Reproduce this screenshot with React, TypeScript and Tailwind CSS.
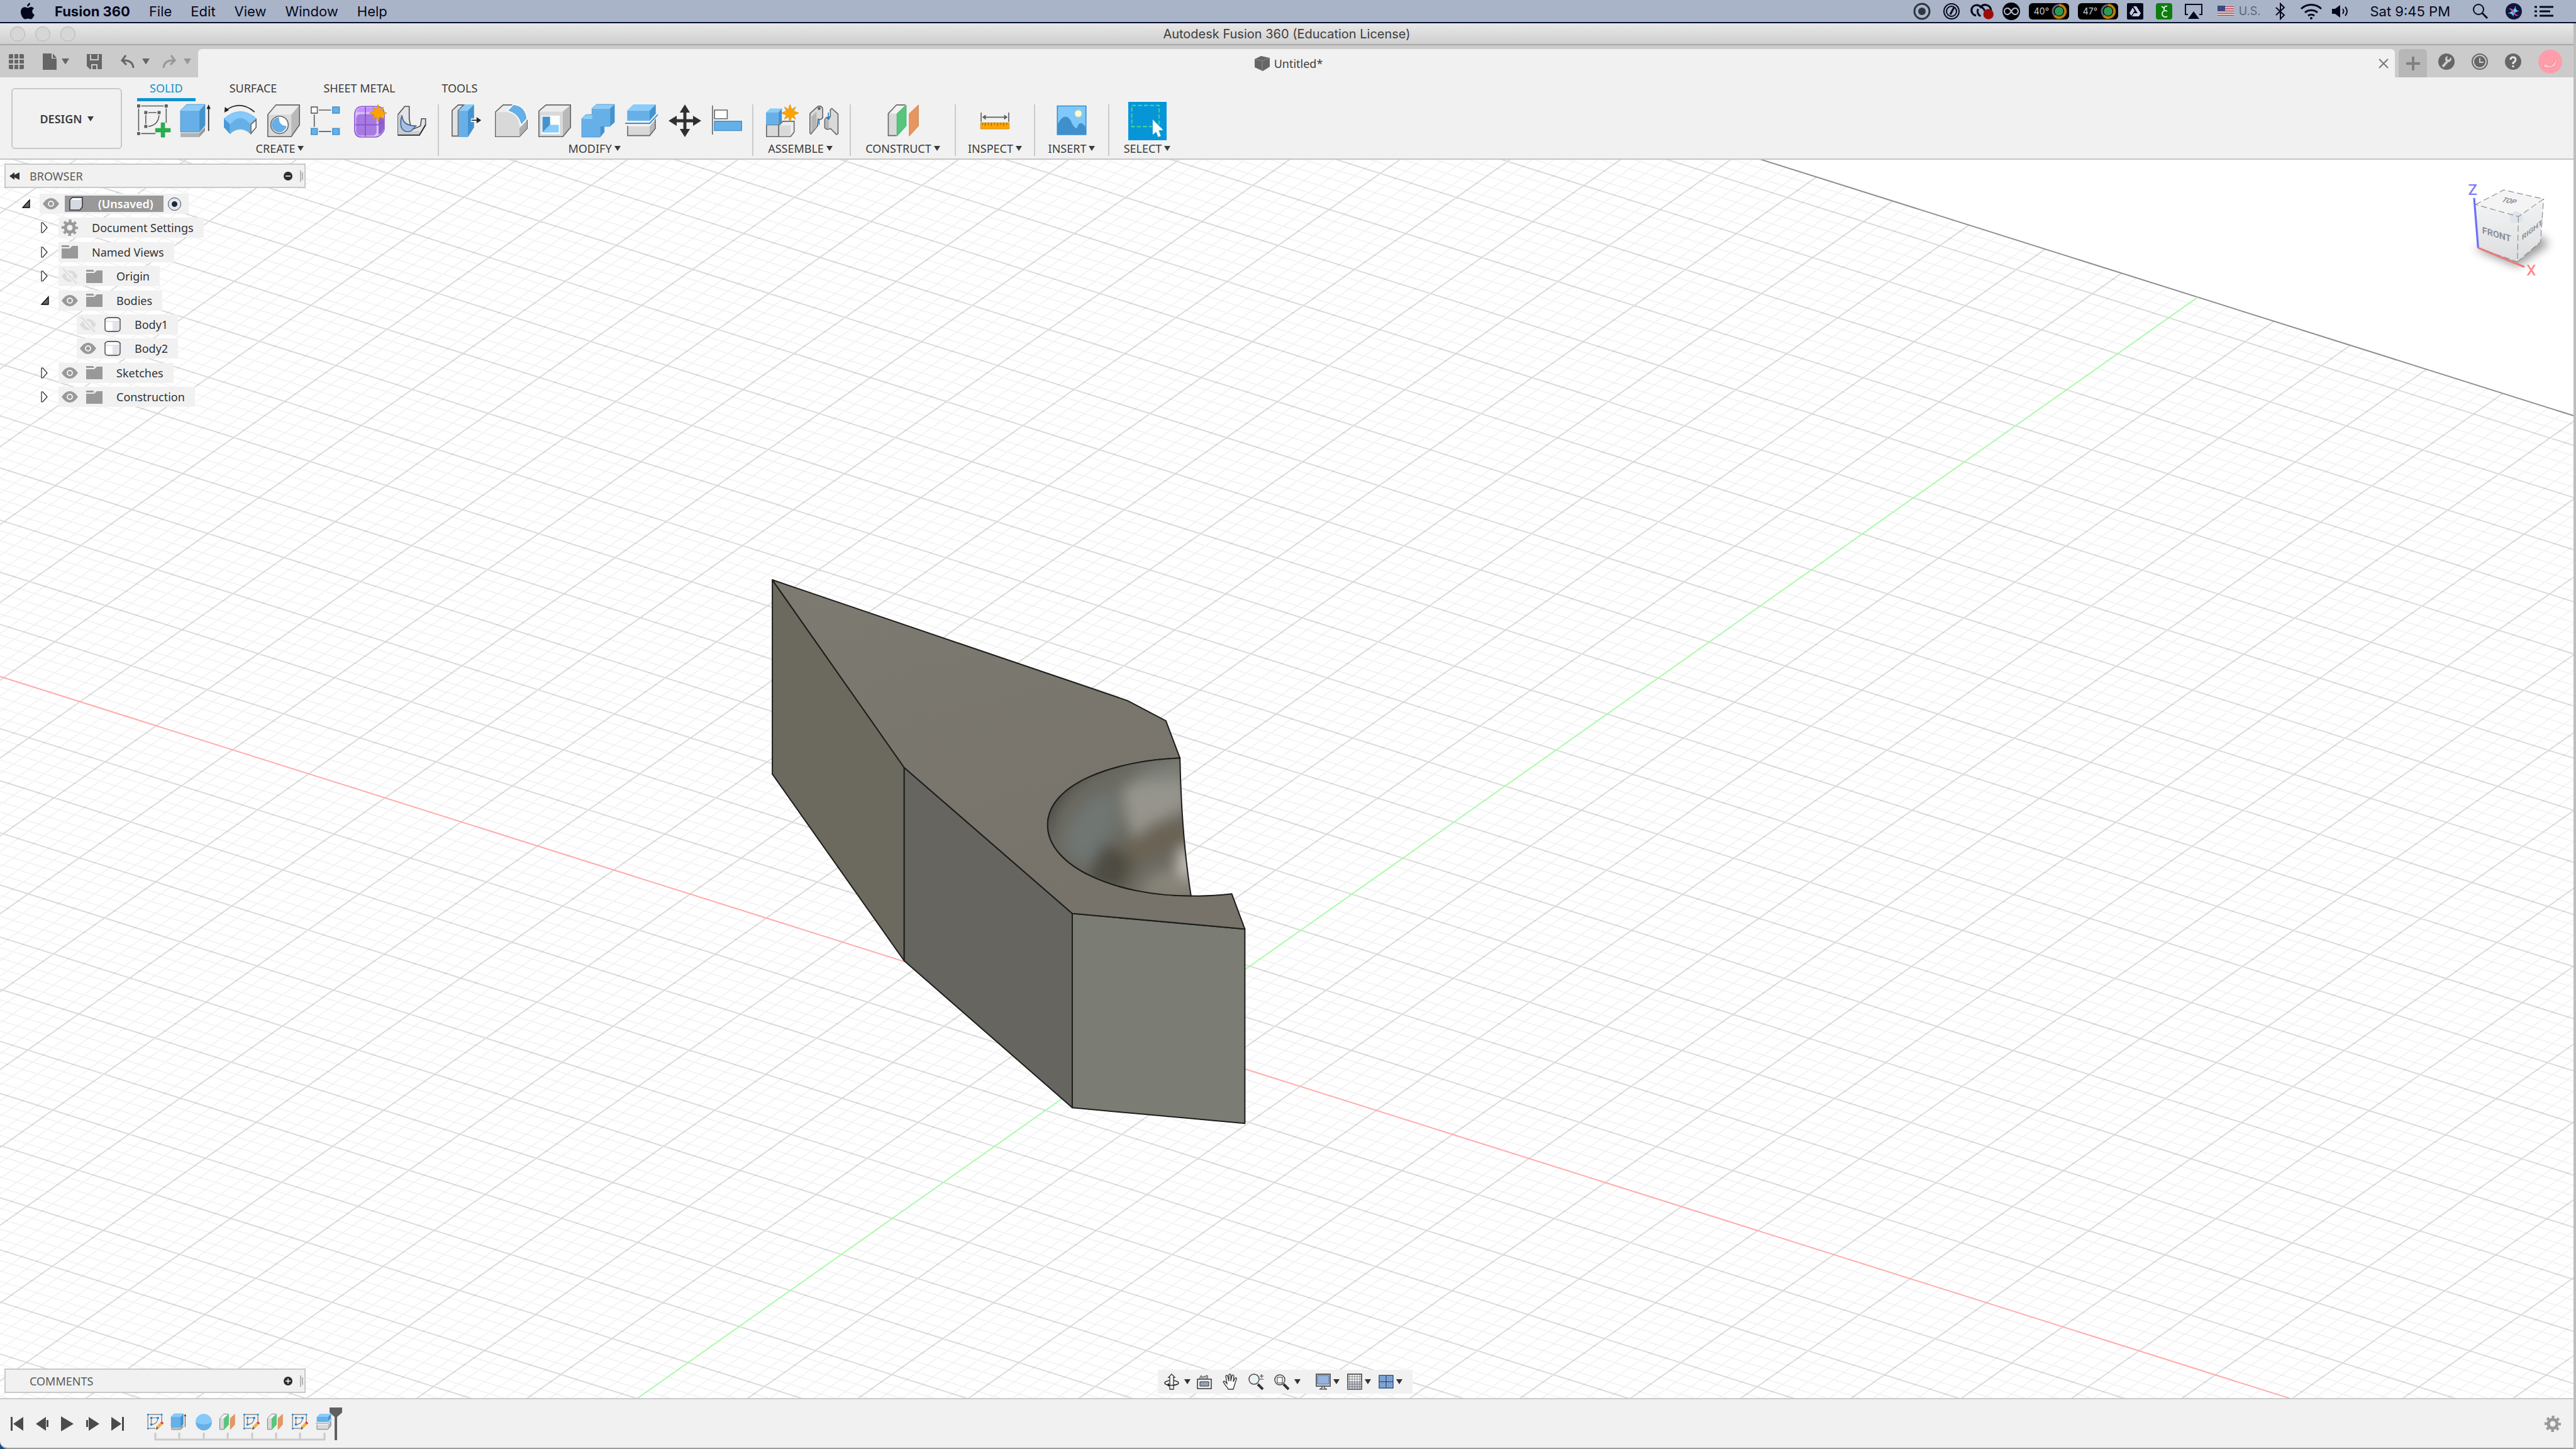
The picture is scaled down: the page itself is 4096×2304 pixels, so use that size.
import type { ReactNode } from "react"
import clsx from "clsx"

/* ---------- shared bits ---------- */

interface IconProps {
  children: ReactNode
  box?: string
  className?: string
}

const Icon: React.FC<IconProps> = ({
  children,
  box = "0 0 64 64",
  className = "size-[52px]",
}) => (
  <svg viewBox={box} className={clsx("shrink-0 overflow-visible", className)} aria-hidden="true">
    {children}
  </svg>
)

const Caret = ({ className = "w-2.5" }: { className?: string }) => (
  <svg viewBox="0 0 10 8" className={clsx("shrink-0", className)} aria-hidden="true">
    <path d="M0 0h10L5 8z" fill="currentColor" />
  </svg>
)

const Star = ({ x, y }: { x: number; y: number }) => (
  <path
    transform={`translate(${x} ${y})`}
    d="M0-17 3-7 11-12 7-4 17 0 7 4 11 12 3 7 0 17-3 7-11 12-7 4-17 0-7-4-11-12-3-7z"
    fill="#ffa300"
    stroke="#d98c00"
    strokeWidth="1"
  />
)

/* ---------- ribbon icons ---------- */

const SketchIcon = () => (
  <Icon>
    <g fill="#5f5f5f">
      <path d="M0 0h6v6H0zM54 0h6v6h-6zM0 54h6v6H0zM14 13h6v6h-6zM40 13h6v6h-6zM14 40h6v6h-6z" />
    </g>
    <path d="M8 3h44M3 8v44M57 8v28M8 57h28M22 16h16M17 21v17M43 21q-2 20-21 22" fill="none" stroke="#5f5f5f" strokeWidth="2" />
    <path d="M47 36h7v11h11v7H54v10h-7V54H36v-7h11z" fill="#26b04c" stroke="#149a3a" />
  </Icon>
)

const ExtrudeShape = () => (
  <>
    <path d="M0 56h37v8H0z" fill="#b3b3b3" />
    <path d="M37 56 48 44v8L37 64z" fill="#9a9a9a" />
    <path d="M0 12h37v42H0z" fill="#67b0e7" />
    <path d="M0 12 12 0h36L37 12z" fill="#8accfb" />
    <path d="M37 12 48 0v41L37 54z" fill="#4493cf" />
    <path d="M0 12v42h37l11-13V0H12z" fill="none" stroke="#3f90cd" strokeWidth="1" />
    <path d="M55 52V6" stroke="#222" strokeWidth="2" />
    <path d="m55 0 4 9h-8z" fill="#222" />
  </>
)

const RevolveIcon = () => (
  <Icon>
    <path d="M0 28Q32 0 64 28L52 39Q32 15 12 39z" fill="#86c9fb" stroke="#69b3e8" />
    <path d="M12 39Q32 15 52 39v19Q32 40 12 58z" fill="#67b0e7" />
    <path d="M0 28 12 39v19L0 45z" fill="#4a99d4" />
    <path d="m53 39 10-9v15L53 57z" fill="#fff" stroke="#5f5f5f" strokeWidth="2" />
    <path d="M60 15Q34-8 6 10" fill="none" stroke="#222" strokeWidth="2" />
    <path d="m1 16 1-11 8 6z" fill="#222" />
  </Icon>
)

const HoleIcon = () => (
  <Icon>
    <path d="M0 20 17 0h47v40L47 64H0z" fill="#ededed" />
    <path d="M0 20h47v44H0z" fill="#d9d9d9" />
    <path d="M47 20 64 0v40L47 64z" fill="#b9b9b9" />
    <path d="M1 20 17 1h46v39L47 63H1z" fill="none" stroke="#666" strokeWidth="2" />
    <circle cx="24" cy="40" r="17" fill="#fff" stroke="#666" strokeWidth="2" />
    <path d="M22 26q0 16 15 17a14 14 0 1 1-15-17z" fill="#67b0e7" stroke="#4493cf" />
  </Icon>
)

const PatternIcon = () => (
  <Icon>
    <path d="M1 5h12v12H1z" fill="#fff" stroke="#5f5f5f" strokeWidth="2" />
    <path d="M43 5h13v12H43zM1 47h12v12H1zM43 47h13v12H43z" fill="#67b0e7" stroke="#4493cf" strokeWidth="2" />
    <path d="M16 11h24M16 53h24M7 20v24" stroke="#5f5f5f" strokeWidth="2" />
  </Icon>
)

const FormIcon = () => (
  <Icon>
    <path d="M1 20Q2 4 16 4h28q14 0 15 14v28q0 6-4 10-6 8-14 8H14Q2 64 1 50z" fill="#d8c1f7" stroke="#8e5ad0" strokeWidth="2" />
    <path d="M14 6h28q6 0 4 9H5q3-9 9-9z" fill="#c391ff" />
    <rect x="4" y="19" width="40" height="42" rx="8" fill="#a779e2" />
    <path d="M48 26q10-4 10 4v16q-2 10-10 13z" fill="#8f5fd1" />
    <path d="M2 40h44l12-6M22 5v58" fill="none" stroke="#8552c6" strokeWidth="2" />
    <Star x={47} y={17} />
  </Icon>
)

const RibIcon = () => (
  <Icon>
    <path d="M1 20 14 4h9v24l4 22 18-8 2-14h8v12L43 60H1z" fill="#e2e4e8" stroke="#4f4f55" strokeWidth="2" />
    <path d="M1 20h8v28l8 8 26-5v9H1z" fill="#c8ccd3" />
    <path d="M9 22q1 20 27 20l-9 10q-12 5-19-6-4-10 1-24z" fill="#a4c0e4" stroke="#4a6390" strokeWidth="2" />
    <path d="M1 60h42l12-20" fill="none" stroke="#222" strokeWidth="2" />
  </Icon>
)

const PressPullIcon = () => (
  <Icon>
    <path d="M1 12 13 1h11L13 12v50H1z" fill="#e2e2e2" stroke="#5f5f5f" strokeWidth="2" />
    <path d="M14 12h18v52H14z" fill="#67b0e7" />
    <path d="M14 12 26 0h18L32 12z" fill="#8accfb" />
    <path d="M32 12 44 0v45L32 64z" fill="#4493cf" />
    <path d="M38 31h13" stroke="#fff" strokeWidth="7" />
    <path d="M39 31h13" stroke="#222" strokeWidth="2" />
    <path d="m49 25 9 6-9 6z" fill="#222" />
  </Icon>
)

const FilletIcon = () => (
  <Icon>
    <path d="M1 15 16 1h20l27 30v16L48 63H1z" fill="#ededed" stroke="#666" strokeWidth="2" />
    <path d="M48 46 62 32v15L48 62z" fill="#b0b0b0" />
    <path d="M2 15h22q24 3 24 32v15H2z" fill="#d9d9d9" />
    <path d="M24 13 36 0q24 2 27 28L51 41Q46 18 24 13z" fill="#67b0e7" stroke="#fff" strokeWidth="2" />
  </Icon>
)

const ShellIcon = () => (
  <Icon>
    <path d="M0 12 15 0h49v45L48 64H0z" fill="#ededed" />
    <path d="M0 14h48v50H0z" fill="#d9d9d9" />
    <path d="M48 14 64 0v45L48 64z" fill="#b9b9b9" />
    <path d="M1 13 15 1h48v44L48 63H1z" fill="none" stroke="#666" strokeWidth="2" />
    <path d="M6 22h36v36H6z" fill="#fff" />
    <path d="M8 24h15v16L8 55z" fill="#4493cf" />
    <path d="m8 55 15-15h17v15z" fill="#8accfb" />
  </Icon>
)

const CombineIcon = () => (
  <Icon>
    <path d="M0 28h20V8h35v35H36v21H0z" fill="#67b0e7" />
    <path d="M0 28 8 20h12v8zM20 8l9-8h35l-9 8z" fill="#8accfb" />
    <path d="m55 8 9-8v35l-9 8H44v11l-8 10V43h19z" fill="#4493cf" />
    <path d="M0 28 8 20h12V8l9-8h35v35l-9 8H44v11l-8 10H0z" fill="none" stroke="#4493cf" />
  </Icon>
)

const SplitShape = () => (
  <>
    <path d="M4 12h44v20H4z" fill="#67b0e7" />
    <path d="M4 12 16 0h44L48 12z" fill="#8accfb" />
    <path d="M48 12 60 0v18L48 32z" fill="#4493cf" />
    <path d="M0 37h48l16-17" fill="none" stroke="#1088d0" strokeWidth="2" />
    <path d="M5 43h43v18H5z" fill="#d9d9d9" />
    <path d="m48 43 11-13v16L48 61z" fill="#b9b9b9" />
    <path d="M5 42v19h43l11-14V29" fill="none" stroke="#666" strokeWidth="2" />
  </>
)

const MoveIcon = () => (
  <Icon>
    <path
      d="m32 0 10 16h-7v13h13v-7l16 10-16 10v-7H35v13h7L32 64 22 48h7V35H16v7L0 32l16-10v7h13V16h-7z"
      fill="#303030"
    />
  </Icon>
)

const AlignIcon = () => (
  <Icon>
    <path d="M1 2v57" stroke="#666" strokeWidth="2" />
    <path d="M5 11h25v17H5z" fill="#fff" stroke="#666" strokeWidth="2" />
    <path d="M5 33h53v18H5z" fill="#67b0e7" stroke="#4493cf" strokeWidth="2" />
  </Icon>
)

const NewComponentIcon = () => (
  <Icon>
    <path d="M1 40h24v23H1z" fill="#d9d9d9" stroke="#666" strokeWidth="2" />
    <path d="m25 41 8-8h22v21l-7 9H25z" fill="#ededed" stroke="#666" strokeWidth="2" />
    <path d="M26 41h22v21H26z" fill="#d9d9d9" />
    <path d="M0 16h24v24H0z" fill="#67b0e7" />
    <path d="m0 16 8-8h23l-7 8z" fill="#8accfb" />
    <path d="m24 16 7-8v26l-7 6z" fill="#4493cf" />
    <Star x={47} y={17} />
  </Icon>
)

const JointIcon = () => (
  <Icon>
    <path d="m1 18 14-13q4-3 8-1 3 2 3 6v16q-3 5-9 3l-1 13L3 58l-2-2z" fill="#d9d9d9" stroke="#666" strokeWidth="2" />
    <path d="m4 24 10-10v30L4 55z" fill="#b5b5b5" />
    <circle cx="19" cy="8" r="3" fill="#666" />
    <path d="M19 29v11" stroke="#1088d0" strokeWidth="2" />
    <path d="M56 19 44 8l-3 2v14l-8 2q-3 2-3 6v14q5 5 11 1l12 12 3-2z" fill="#d9d9d9" stroke="#666" strokeWidth="2" />
    <path d="M31 30h7v17h-7z" fill="#b5b5b5" />
    <path d="M37 16v11" stroke="#1088d0" strokeWidth="2" />
    <circle cx="37" cy="27" r="3" fill="#1088d0" />
  </Icon>
)

const ConstructShape = () => (
  <>
    <path d="M0 18 17 1h17L18 18z" fill="#f2f2f2" />
    <path d="M1 18h17v43H1z" fill="#d9d9d9" />
    <path d="M34 1H17L1 18v43h16" fill="none" stroke="#666" strokeWidth="2" />
    <path d="M18 18 36 1v41L18 62z" fill="#57c57c" stroke="#2faa5a" />
    <path d="M42 18 60 1v41L42 62z" fill="#e69660" stroke="#cf7a42" />
  </>
)

const MeasureIcon = () => (
  <Icon box="-4 0 64 64">
    <path d="M1 16v18M55 16v18M6 25h44" stroke="#5f5f5f" strokeWidth="2" />
    <path d="m3 25 7-5v10zM53 25l-7-5v10z" fill="#5f5f5f" />
    <path d="M0 36h56v12H0z" fill="#ffa300" stroke="#c98a12" />
    <path d="M4 36v4M9 36v6M15 36v4M21 36v6M27 36v4M33 36v6M39 36v4M45 36v6M51 36v4" stroke="#6b4a00" />
  </Icon>
)

const InsertIcon = () => (
  <Icon box="-3 0 64 64">
    <path d="M1 3h56v56H1z" fill="#80c8fb" stroke="#3b8ecb" strokeWidth="2" />
    <circle cx="42" cy="18" r="7" fill="#fdfbd0" stroke="#b8cfa4" />
    <path d="M1 40q8-16 16-16t13 14q5 8 9 9 4-12 9-10 5 1 9 9v13H1z" fill="#3d90cc" />
  </Icon>
)

const SelectIcon = () => (
  <Icon box="0 0 76 76" className="-my-1 size-[61px] bg-[#0696d7]">
    <path d="M7 7h54v42H7z" fill="none" stroke="#53e08a" strokeWidth="2" strokeDasharray="8 4" />
    <path d="M48 34v32l7-6 4 10 6-2-4-11 9-1z" fill="#fff" stroke="#0696d7" />
  </Icon>
)

/* ---------- ribbon ---------- */

interface RibbonGroup {
  label: string
  width?: string
  tools: { name: string; icon: ReactNode }[]
}

const groups: RibbonGroup[] = [
  {
    label: "CREATE",
    tools: [
      { name: "Create Sketch", icon: <SketchIcon /> },
      { name: "Extrude", icon: <Icon><ExtrudeShape /></Icon> },
      { name: "Revolve", icon: <RevolveIcon /> },
      { name: "Hole", icon: <HoleIcon /> },
      { name: "Rectangular Pattern", icon: <PatternIcon /> },
      { name: "Create Form", icon: <FormIcon /> },
      { name: "Rib", icon: <RibIcon /> },
    ],
  },
  {
    label: "MODIFY",
    tools: [
      { name: "Press Pull", icon: <PressPullIcon /> },
      { name: "Fillet", icon: <FilletIcon /> },
      { name: "Shell", icon: <ShellIcon /> },
      { name: "Combine", icon: <CombineIcon /> },
      { name: "Split Body", icon: <Icon><SplitShape /></Icon> },
      { name: "Move", icon: <MoveIcon /> },
      { name: "Align", icon: <AlignIcon /> },
    ],
  },
  {
    label: "ASSEMBLE",
    tools: [
      { name: "New Component", icon: <NewComponentIcon /> },
      { name: "Joint", icon: <JointIcon /> },
    ],
  },
  {
    label: "CONSTRUCT",
    width: "w-[167px]",
    tools: [{ name: "Offset Plane", icon: <Icon box="-2 0 64 64"><ConstructShape /></Icon> }],
  },
  { label: "INSPECT", width: "w-[126px]", tools: [{ name: "Measure", icon: <MeasureIcon /> }] },
  { label: "INSERT", width: "w-[118px]", tools: [{ name: "Insert Image", icon: <InsertIcon /> }] },
  { label: "SELECT", width: "w-[120px]", tools: [{ name: "Select", icon: <SelectIcon /> }] },
]

const tabs = ["SOLID", "SURFACE", "SHEET METAL", "TOOLS"]

const Ribbon = () => (
  <div className="flex h-[131px] shrink-0 border-b-2 border-[#c6c6c6] bg-[#f1f1f1] pl-[18px] text-[18px] leading-6 text-[#3c3c3c]">
    <button className="mt-[17px] flex h-[97px] w-[176px] items-center justify-center gap-2 rounded-md border-2 border-[#c9c9c9] font-semibold">
      DESIGN
      <Caret />
    </button>
    <div className="ml-1 flex flex-col">
      <nav className="flex h-[38px] gap-[34px] pl-5">
        {tabs.map((tab, i) => (
          <button
            key={tab}
            className={clsx(
              "border-b-5 px-5",
              i === 0 ? "border-[#0f93d2] text-[#0f93d2]" : "border-transparent",
            )}
          >
            {tab}
          </button>
        ))}
      </nav>
      <div className="mt-[5px] flex">
        {groups.map((group, i) => (
          <div
            key={group.label}
            className={clsx(
              "flex h-[82px] flex-col items-center justify-between",
              i < groups.length - 1 && "border-r-2 border-[#cbcbcb]",
              group.width ?? "pl-5 pr-3",
            )}
          >
            <div className="flex h-[52px] items-center gap-[17px]">
              {group.tools.map((tool) => (
                <button key={tool.name} aria-label={tool.name}>
                  {tool.icon}
                </button>
              ))}
            </div>
            <button className={clsx("flex items-center gap-1", !group.width && "pr-3")}>
              {group.label}
              <Caret />
            </button>
          </div>
        ))}
      </div>
    </div>
  </div>
)

/* ---------- system menu bar ---------- */

const SystemBar = () => (
  <header className="flex h-[37px] shrink-0 items-center border-b-2 border-[#03102e] bg-[#a9b4c9] pl-[33px] pr-9 font-[Inter,sans-serif] text-[22px] leading-8 text-[#05081c]">
    <Icon box="0 0 22 27" className="h-7 w-[22px]">
      <path
        d="M15 0q0 5-5 6 0-5 5-6zM11 8c2 0 3-1.500 5.500-1.500 2 0 3.500 1 4.500 2.500-4 2.500-3.500 8 .8 9.700C20.500 22.500 18 26 16 26c-1.700 0-2.500-1-4.500-1S8.500 26 7 26C4 26 0 20 0 14.500 0 9.500 3 6.700 6.300 6.700 8.500 6.700 10 8 11 8z"
        fill="currentColor"
      />
    </Icon>
    <nav className="ml-8 flex gap-[30px]">
      {["Fusion 360", "File", "Edit", "View", "Window", "Help"].map((item, i) => (
        <button key={item} className={clsx(i === 0 && "font-bold")}>
          {item}
        </button>
      ))}
    </nav>

    <div className="ml-auto flex items-center">
      <Icon box="0 0 28 28" className="size-7">
        <circle cx="14" cy="14" r="12" fill="none" stroke="#30363f" strokeWidth="3" />
        <circle cx="14" cy="14" r="6" fill="#30363f" />
      </Icon>
      <Icon box="0 0 26 26" className="ml-5 size-[26px]">
        <circle cx="13" cy="13" r="12" fill="none" stroke="currentColor" strokeWidth="2" />
        <circle cx="13" cy="13" r="8" fill="none" stroke="currentColor" strokeWidth="2" />
        <path d="m17 7-6 11" stroke="currentColor" strokeWidth="3" />
      </Icon>
      <Icon box="0 0 33 26" className="ml-5 w-[34px]">
        <path d="M6 20a8 8 0 1 1 7-13 9 9 0 0 1 16 5M13 21a8 8 0 0 1-4-11M13 7q5 1 6 6" fill="none" stroke="currentColor" strokeWidth="3" />
        <circle cx="25" cy="18" r="8" fill="#9b0b0b" />
      </Icon>
      <Icon box="0 0 28 28" className="ml-3.5 size-7">
        <circle cx="14" cy="14" r="14" fill="#04040a" />
        <path d="M14 14q-3-5-6-5a5 5 0 0 0 0 10q3 0 6-5 3-5 6-5a5 5 0 0 1 0 10q-3 0-6-5z" fill="none" stroke="#b9c4da" strokeWidth="2" />
      </Icon>
      {["40°", "47°"].map((temp) => (
        <span key={temp} className="ml-3.5 flex h-[26px] w-16 items-center justify-between rounded-md bg-black pl-2 pr-1 text-[14px] leading-6 text-[#c4cad6]">
          {temp}
          <Icon box="0 0 24 24" className="size-6">
            <circle cx="12" cy="12" r="10" fill="none" stroke="#5c6678" strokeWidth="3" />
            <path d="M12 2a10 10 0 1 1-7 17" fill="none" stroke="#bd7a0c" strokeWidth="4" />
            <circle cx="12" cy="12" r="7" fill="#2d9a52" />
          </Icon>
        </span>
      ))}
      <Icon box="0 0 26 26" className="ml-3.5 size-[26px]">
        <rect width="26" height="26" rx="2" fill="#05081c" />
        <path d="M10 5h5l7 11h-5zM9 7l3 5-5 8-3-4zM11 16h11l-3 5H8z" fill="#c5cde0" />
      </Icon>
      <Icon box="0 0 26 26" className="ml-5 size-[26px]">
        <rect width="26" height="26" rx="4" fill="#0d7d0d" />
        <path d="M18 13a5 5 0 1 0 0 8M13 11V8l-4-3M13 8q1-4 5-3" fill="none" stroke="#d9f3d9" strokeWidth="2" />
      </Icon>
      <Icon box="0 0 28 24" className="ml-5 w-7">
        <path d="M5 17H1V1h26v16h-4" fill="none" stroke="currentColor" strokeWidth="2" />
        <path d="m14 12 9 12H5z" fill="currentColor" />
      </Icon>
      <Icon box="0 0 26 17" className="ml-6 w-[26px]">
        <path d="M0 0h26v17H0z" fill="#e8dcdc" />
        <path d="M0 1.500h26M0 5h26M0 8.500h26M0 12h26M0 15.500h26" stroke="#a83a4a" strokeWidth="1.700" />
        <path d="M0 0h12v9H0z" fill="#3a4a82" />
      </Icon>
      <span className="ml-2 text-[18px] text-[#5c6374]">U.S.</span>
      <Icon box="0 0 16 26" className="ml-6 w-4">
        <path d="m1 7 13 12-6 6V1l6 6L1 19" fill="none" stroke="currentColor" strokeWidth="2" />
      </Icon>
      <Icon box="0 0 34 26" className="ml-6 w-[34px]">
        <path d="M1 9a23 23 0 0 1 32 0M7 15a15 15 0 0 1 20 0M12 20a8 8 0 0 1 10 0" fill="none" stroke="currentColor" strokeWidth="3" />
        <circle cx="17" cy="24" r="2" fill="currentColor" />
      </Icon>
      <Icon box="0 0 28 22" className="ml-4 w-7">
        <path d="M0 7h5l8-6v20l-8-6H0z" fill="currentColor" />
        <path d="M17 7q3 4 0 8M21 4q6 7 0 14" fill="none" stroke="currentColor" strokeWidth="2" />
      </Icon>
      <span className="ml-8">Sat 9:45 PM</span>
      <Icon box="0 0 24 24" className="ml-9 w-6">
        <circle cx="9" cy="9" r="8" fill="none" stroke="currentColor" strokeWidth="2" />
        <path d="m15 15 8 8" stroke="currentColor" strokeWidth="3" />
      </Icon>
      <Icon box="0 0 26 26" className="ml-7 size-[26px]">
        <circle cx="13" cy="13" r="13" fill="#12143a" />
        <path d="M3 16q10-2 13-12-1 8 6 9-9 0-10 9 0-6-9-6z" fill="#5ad2ee" />
        <path d="M5 8q7 0 9 6t8 5q-6 3-9-2T5 8z" fill="#d04fb0" />
      </Icon>
      <Icon box="0 0 30 18" className="ml-5 w-[30px]">
        <path d="M0 2h4M8 2h22M0 9h4M8 9h17M0 16h4M8 16h22" stroke="currentColor" strokeWidth="3" />
      </Icon>
    </div>
  </header>
)

/* ---------- document strip ---------- */

const DocumentStrip = () => (
  <div className="flex h-[51px] shrink-0 bg-[#cbcbcb] text-[#666]">
    <div className="flex w-[315px] items-center pl-3.5">
      <button aria-label="Data panel">
        <Icon box="0 0 24 24" className="size-6">
          <rect width="24" height="24" rx="2" fill="currentColor" />
          <path d="M8 0v24M16 0v24M0 8h24M0 16h24" stroke="#cbcbcb" strokeWidth="2" />
        </Icon>
      </button>
      <button className="ml-[30px] flex items-center gap-2" aria-label="File">
        <Icon box="0 0 22 26" className="w-[22px]">
          <path d="M0 0h14v8h8v18H0zM16 0l6 7h-6z" fill="currentColor" />
        </Icon>
        <Caret className="w-3" />
      </button>
      <button className="ml-7" aria-label="Save">
        <Icon box="0 0 24 24" className="size-6">
          <path d="M0 0h24v24H5l-5-5z" fill="currentColor" />
          <path d="M6 1v8h12V1M8 24v-7h8v7" fill="none" stroke="#cbcbcb" strokeWidth="2" />
        </Icon>
      </button>
      <button className="ml-[30px] flex items-center gap-3" aria-label="Undo">
        <Icon box="0 0 22 22" className="w-[22px]">
          <path d="M8 1 2 9l7 7M3 9q16-1 17 12" fill="none" stroke="currentColor" strokeWidth="3" />
        </Icon>
        <Caret className="w-3" />
      </button>
      <button className="ml-5 flex items-center gap-3 text-[#979797]" aria-label="Redo">
        <Icon box="0 0 22 22" className="w-[22px]">
          <path d="m14 1 6 8-7 7M19 9Q3 8 2 21" fill="none" stroke="currentColor" strokeWidth="3" />
        </Icon>
        <Caret className="w-3" />
      </button>
    </div>

    <div className="mt-1.5 flex flex-1 items-center rounded-t-md bg-[#f1f1f1] pr-2.5 text-[18px] leading-6 text-[#3c3c3c]">
      <div className="flex flex-1 items-center justify-center gap-1.5">
        <Icon box="0 0 26 26" className="size-[26px]">
          <path d="M1 6 11 1l14 3v14L14 25 1 19z" fill="#666" />
          <path d="m1 6 12 3 12-5M13 9v16" fill="none" stroke="#8c8c8c" />
        </Icon>
        Untitled*
      </div>
      <button aria-label="Close tab">
        <Icon box="0 0 16 16" className="size-4">
          <path d="m1 1 14 14M15 1 1 15" stroke="#777" strokeWidth="2" />
        </Icon>
      </button>
    </div>

    <button className="ml-1.5 mt-1.5 flex w-[45px] items-center justify-center rounded-t-md bg-[#b7b7b7]" aria-label="New tab">
      <Icon box="0 0 22 22" className="w-[22px]">
        <path d="M11 0v22M0 11h22" stroke="#808080" strokeWidth="4" />
      </Icon>
    </button>
    <div className="flex items-center gap-[27px] pl-[18px] pr-[18px]">
      <button aria-label="Extensions">
        <Icon box="0 0 26 26" className="size-[26px]">
          <circle cx="13" cy="13" r="13" fill="currentColor" />
          <path d="m7 21 8-9" stroke="#cbcbcb" strokeWidth="4" />
          <path d="M20 6a5 5 0 1 1-5-2l-1 5 3 1z" fill="#cbcbcb" />
        </Icon>
      </button>
      <button aria-label="Job status">
        <Icon box="0 0 26 26" className="size-[26px]">
          <circle cx="13" cy="13" r="12" fill="none" stroke="currentColor" strokeWidth="2" />
          <circle cx="13" cy="13" r="9" fill="currentColor" />
          <path d="M13 7v7h6" fill="none" stroke="#cbcbcb" strokeWidth="2" />
        </Icon>
      </button>
      <button aria-label="Help">
        <Icon box="0 0 26 26" className="size-[26px]">
          <circle cx="13" cy="13" r="13" fill="currentColor" />
          <path d="M9 10q0-4 4-4t4 4q0 2-4 5v2M13 19v3" fill="none" stroke="#e5e5e5" strokeWidth="3" />
        </Icon>
      </button>
      <button aria-label="Account">
        <Icon box="0 0 38 38" className="size-[38px]">
          <circle cx="19" cy="19" r="19" fill="#ff9dab" />
          <path d="M8 27q2-7 7-3 6 4 8-2 5-1 3-6l2-3q3 5 0 11-4 6-16 5-4 0-4-2z" fill="#fbc3c8" stroke="#e98a92" />
        </Icon>
      </button>
    </div>
  </div>
)

/* ---------- browser tree ---------- */

interface TreeNode {
  name: string
  indent: string
  kind: "gear" | "folder" | "body"
  eye?: "on" | "off"
  arrow?: "open" | "closed"
}

const nodes: TreeNode[] = [
  { name: "Document Settings", indent: "pl-[58px]", kind: "gear", arrow: "closed" },
  { name: "Named Views", indent: "pl-[58px]", kind: "folder", arrow: "closed" },
  { name: "Origin", indent: "pl-[58px]", kind: "folder", eye: "off", arrow: "closed" },
  { name: "Bodies", indent: "pl-[58px]", kind: "folder", eye: "on", arrow: "open" },
  { name: "Body1", indent: "pl-[87px]", kind: "body", eye: "off" },
  { name: "Body2", indent: "pl-[87px]", kind: "body", eye: "on" },
  { name: "Sketches", indent: "pl-[58px]", kind: "folder", eye: "on", arrow: "closed" },
  { name: "Construction", indent: "pl-[58px]", kind: "folder", eye: "on", arrow: "closed" },
]

const Eye = ({ off }: { off?: boolean }) => (
  <Icon box="0 0 26 18" className="w-[26px]">
    <path d="M0 9Q6 0 13 0t13 9q-6 9-13 9T0 9z" fill={off ? "#dcdcdc" : "#999"} />
    <circle cx="13" cy="9" r="4" fill="none" stroke="#f1f1f1" strokeWidth="2" />
    {off && (
      <>
        <path d="m2-3 22 24" stroke="#f1f1f1" strokeWidth="6" />
        <path d="m2-3 22 24" stroke="#dcdcdc" strokeWidth="2" />
      </>
    )}
  </Icon>
)

const Arrow = ({ kind }: { kind?: "open" | "closed" }) => (
  <Icon box="0 0 14 18" className="w-3.5">
    {kind === "open" && <path d="M12 3v12H1z" fill="#666" stroke="#000" strokeWidth="1.300" />}
    {kind === "closed" && <path d="M1 1h2l7 8-7 8H1z" fill="#fff" stroke="#222" strokeWidth="1.200" />}
  </Icon>
)

const Gear = () => (
  <Icon box="0 0 26 26" className="size-[26px]">
    <circle cx="13" cy="13" r="7" fill="none" stroke="#999" strokeWidth="5" />
    <circle cx="13" cy="13" r="11" fill="none" stroke="#999" strokeWidth="4" strokeDasharray="4.300 4.340" strokeDashoffset="2" />
  </Icon>
)

const NodeIcon = ({ kind }: { kind: TreeNode["kind"] }) => {
  if (kind === "gear") return <Gear />
  if (kind === "folder")
    return (
      <Icon box="0 0 26 21" className="w-[26px]">
        <path d="M0 0h11l2 3H0zM0 5h13l4-4h9v20H0z" fill="#999" />
      </Icon>
    )
  return (
    <Icon box="0 0 26 24" className="w-[26px]">
      <path d="M1 4v15q0 4 5 4h14q5 0 5-4V4z" fill="#e4e5ea" stroke="#3e3e44" strokeWidth="1.300" />
      <path d="M2 8h11v14H6q-4 0-4-3z" fill="#fff" />
      <path d="M1 4q1-3 7-3h10q6 0 7 3-1 3-7 3H8Q2 7 1 4z" fill="#fff" stroke="#d5d6db" />
      <path d="M1 5q0-4 7-4h10q7 0 7 4" fill="none" stroke="#3e3e44" strokeWidth="1.300" />
    </Icon>
  )
}

const PanelBar = ({ title, open }: { title: string; open: boolean }) => (
  <div className="flex h-[39px] w-[479px] items-center border-2 border-[#c9c9c9] bg-[#f1f1f1] pl-1.5 pr-0.5 text-[18px] leading-6 text-[#5a5a5a]">
    <Icon box="0 0 16 12" className="w-4">
      {open && <path d="m0 6 8-6v4l8-4v12l-8-4v4z" fill="#333" />}
    </Icon>
    <h2 className="ml-4">{title}</h2>
    <button className="ml-auto" aria-label={open ? `Collapse ${title}` : `Expand ${title}`}>
      <Icon box="0 0 14 14" className="size-3.5">
        <circle cx="7" cy="7" r="7" fill="#2d2d2d" />
        <path d={open ? "M3 7h8" : "M3 7h8M7 3v8"} stroke="#fff" strokeWidth="1.500" />
      </Icon>
    </button>
    <Icon box="0 0 5 18" className="ml-3 h-[18px] w-[5px]">
      <path d="M1 0v18M4 3v12" stroke="#777" />
    </Icon>
  </div>
)

const Browser = () => (
  <section className="absolute left-[7px] top-1.5 text-[18px] leading-6 text-[#333]">
    <PanelBar title="BROWSER" open />
    <ul className="mt-[9px] flex h-[339px] flex-col justify-between">
      <li className="flex h-8 items-center pl-7">
        <Arrow kind="open" />
        <div className="ml-3.5 flex h-8 items-center bg-[#f1f1f1] px-[5px]">
          <Eye />
          <span className="ml-[9px] flex h-[26px] w-[157px] items-center bg-[#999] pl-[7px] font-semibold text-white">
            <Icon box="0 0 22 22" className="w-[22px]">
              <path d="m1 5 4-4h16v15l-4 5H1z" fill="#d5d9e2" stroke="#33363e" strokeWidth="1.500" />
              <path d="m2 5 4-3h14l-3 3z" fill="#fff" />
            </Icon>
            <span className="ml-6">(Unsaved)</span>
          </span>
          <input
            type="radio"
            defaultChecked
            aria-label="Activate component"
            className="mx-[7px] size-[21px] appearance-none rounded-full border border-[#3a3f4c] bg-[radial-gradient(circle,#222734_4px,#e3e7f3_5px)]"
          />
        </div>
      </li>
      {nodes.map((node) => (
        <li key={node.name} className={clsx("flex h-8 items-center", node.indent)}>
          <Arrow kind={node.arrow} />
          <div className="ml-3.5 flex h-8 items-center bg-[#f1f1f1] pl-[5px] pr-4">
            {node.eye && (
              <span className="mr-[13px] flex">
                <Eye off={node.eye === "off"} />
              </span>
            )}
            <NodeIcon kind={node.kind} />
            <span className="ml-[22px]">{node.name}</span>
          </div>
        </li>
      ))}
    </ul>
  </section>
)

/* ---------- modelling canvas ---------- */

// Ground grid is an orthographic projection: origin plus one vector per major cell.
const ORIGIN = [2280.8, 2064]
const U = [151.56, 47.78]
const V = [101.46, -71.6]
const FAR = 20.57

const at = (a: number, b: number) =>
  `${(ORIGIN[0] + a * U[0] + b * V[0]).toFixed(1)} ${(ORIGIN[1] + a * U[1] + b * V[1]).toFixed(1)}`

const gridPath = (major: boolean) => {
  const parts: string[] = []
  for (let i = -180; i <= 180; i++) {
    if ((i % 5 === 0) !== major || i === 0) continue
    parts.push(`M${at(i / 5, -36)}L${at(i / 5, FAR)}`)
    if (i / 5 < FAR) parts.push(`M${at(-36, i / 5)}L${at(36, i / 5)}`)
  }
  return parts.join("")
}

const Scene = () => (
  <svg
    viewBox="0 318 5115 2461"
    preserveAspectRatio="xMinYMin slice"
    className="absolute inset-0 h-full w-full"
    role="img"
    aria-label="Model view"
  >
    <defs>
      <clipPath id="bore">
        <path d="M2345 1507C2215 1512 2082 1558 2082 1640C2082 1722 2215 1781 2367 1781Q2348 1660 2345 1507z" />
      </clipPath>
      <filter id="soft" x="-60%" y="-60%" width="220%" height="220%">
        <feGaussianBlur stdDeviation="14" />
      </filter>
      <filter id="shadow" x="-50%" y="-50%" width="200%" height="200%">
        <feGaussianBlur stdDeviation="9" />
      </filter>
      <linearGradient id="top" x1="0" y1="0" x2="0.4" y2="1">
        <stop offset="0" stopColor="#7d7a72" />
        <stop offset="1" stopColor="#77736a" />
      </linearGradient>
      <linearGradient id="side" x1="0" y1="0" x2="0" y2="1">
        <stop offset="0" stopColor="#f2f3f4" />
        <stop offset="1" stopColor="#dcdddf" />
      </linearGradient>
    </defs>

    <path d={gridPath(false)} stroke="#000" strokeOpacity="0.055" strokeWidth="2" fill="none" />
    <path d={gridPath(true)} stroke="#000" strokeOpacity="0.14" strokeWidth="2.500" fill="none" />
    <path d={`M${at(-36, FAR)}L${at(36, FAR)}`} stroke="#8f8f8f" strokeWidth="2.500" />
    <path d={`M${at(-36, 0)}L${at(36, 0)}`} stroke="#ffacac" strokeWidth="2.500" />
    <path d={`M${at(0, -36)}L${at(0, FAR)}`} stroke="#acf9ac" strokeWidth="2.500" />

    {/* solid body */}
    <g stroke="#1d1d1b" strokeWidth="2.500" strokeLinejoin="round">
      <path d="M1535 1153L1797 1526V1910L1535 1539z" fill="#6c695f" />
      <path d="M1797 1526L2131 1816V2202L1797 1910z" fill="#666560" />
      <path d="M2131 1816L2474 1847V2233L2131 2202z" fill="#7b7d75" />
      <path
        d="M1535 1153L2241 1393L2317 1433L2345 1507C2215 1512 2082 1558 2082 1640C2082 1722 2215 1781 2367 1781Q2405 1782 2448 1777L2474 1847L2131 1816L1797 1526z"
        fill="url(#top)"
      />
    </g>
    <g clipPath="url(#bore)">
      <path d="M2060 1490h330v310h-330z" fill="#6a6961" />
      <g filter="url(#soft)">
        <path d="M2070 1640q10-100 160-130l30-20-200 0v190z" fill="#4b4a44" />
        <path d="M2200 1520q-80 30-110 110l-10 60-20-200z" fill="#4b4a44" />
        <path d="M2205 1570q30 20 10 80-30 50-60 70l-40-30q0-80 90-120z" fill="#6f7672" />
        <path d="M2262 1530l100-30v60l-110 20z" fill="#7b7e78" />
        <path d="M2232 1560q60-10 130-10v60q-50 10-60 30-20 40-50 20-20-30-20-100z" fill="#96948d" />
        <path d="M2200 1690q60-20 90-55l80-10v60q-80 10-110 40-30 50-60 30z" fill="#6a6454" />
        <path d="M2190 1680q30 0 60 30-10 50-30 60l-60-20z" fill="#4e4b43" />
        <path d="M2260 1790q10-50 50-60l70-20v80z" fill="#878378" />
        <ellipse cx="2358" cy="1714" rx="16" ry="30" fill="#cdc8c2" />
      </g>
    </g>
    <path
      d="M2345 1507C2215 1512 2082 1558 2082 1640C2082 1722 2215 1781 2367 1781Q2348 1660 2345 1507z"
      fill="none"
      stroke="#1d1d1b"
      strokeWidth="2.500"
    />

    {/* view cube */}
    <path d="M4915 494L5003 530L5066 486L5050 470z" fill="#000" opacity="0.4" filter="url(#shadow)" />
    <path d="M4920 407L5005 431L5003 521L4925 493z" fill="url(#side)" />
    <path d="M5005 431L5055 396L5049 481L5003 521z" fill="url(#side)" />
    <path d="M4920 407L4976 378L5055 396L5005 431z" fill="#f4f4f5" />
    <path d="M4988 426L5000 420L5014 426L5013 442L4989 444z" fill="#dfe4ec" />
    <path
      d="M4920 407L4976 378L5055 396L5005 431zM5005 431L5003 521L5049 481L5055 396M4925 493L5003 521"
      fill="none"
      stroke="#8e8e8e"
      strokeWidth="1.500"
      strokeDasharray="12 6"
    />
    <path d="M4917 394L4925 493" stroke="#6d6dff" strokeWidth="4" />
    <path d="M4925 493L5017 531" stroke="#e87c7c" strokeWidth="4" />
    <g fontFamily="Roboto, sans-serif" fill="#8b8f95" fontWeight="700">
      <text transform="translate(4933 464) skewY(17)" fontSize="18">
        FRONT
      </text>
      <text transform="translate(5012 478) skewY(-38)" fontSize="14">
        RIGHT
      </text>
      <text transform="translate(4970 401) rotate(12) skewX(-30)" fontSize="14">
        TOP
      </text>
    </g>
    <g fontFamily="Roboto, sans-serif" fontSize="30" fontWeight="500">
      <text x="4905" y="388" fill="#7d7dff">
        Z
      </text>
      <text x="5021" y="548" fill="#ff8c8c">
        X
      </text>
    </g>
  </svg>
)

const NavBar = () => (
  <div className="absolute bottom-[7px] left-[45%] flex h-[38px] w-[405px] items-center bg-[#f1f1f1] pl-2.5 text-[#333]">
    <button className="flex items-center gap-2" aria-label="Orbit">
      <Icon box="0 0 24 26" className="w-6">
        <ellipse cx="12" cy="15" rx="11" ry="4" fill="none" stroke="#333" strokeWidth="1.500" />
        <path d="M9 25V6H7l5-5 5 5h-2v19z" fill="#f5f5f8" stroke="#333" strokeWidth="1.300" />
        <path d="M5 18q8 2 16-1" fill="none" stroke="#333" strokeWidth="1.500" />
        <path d="m8 15-4 3 4 3z" fill="#222" />
      </Icon>
      <Caret />
    </button>
    <button className="ml-2.5" aria-label="Look At">
      <Icon box="0 0 24 24" className="w-6">
        <path d="M1 8h22v15H1z" fill="#eef0f5" stroke="#333" strokeWidth="1.500" />
        <path d="M5 12h14v7H5z" fill="#9aa1b4" stroke="#333" />
        <path d="m4 7 3-5 1 3 9-3v5" fill="#b6bac6" stroke="#444" />
      </Icon>
    </button>
    <button className="ml-[17px]" aria-label="Pan">
      <Icon box="0 0 24 26" className="w-6">
        <path
          d="M9 25q-2-4-5-7l-3-5q2-2 4 1l2 2L5 4q2-2 3 0l2 8V2q2-2 3 0v10l2-9q2-2 3 1l-1 9 3-6q3-1 2 2l-3 9-2 7z"
          fill="#fafafc"
          stroke="#333"
          strokeWidth="1.300"
        />
      </Icon>
    </button>
    <button className="ml-[17px]" aria-label="Zoom">
      <Icon box="0 0 24 26" className="w-6">
        <path d="m15 17 8 8" stroke="#333" strokeWidth="4" />
        <circle cx="9" cy="9" r="8" fill="#e9f3f3" stroke="#444" strokeWidth="1.500" />
        <path d="M18 4h6M21 1v6M18 9h6" stroke="#333" />
      </Icon>
    </button>
    <button className="ml-[17px] flex items-center gap-2" aria-label="Fit">
      <Icon box="0 0 24 26" className="w-6">
        <path d="m15 17 8 8" stroke="#333" strokeWidth="4" />
        <circle cx="9" cy="10" r="8" fill="#e9f3f3" stroke="#444" strokeWidth="1.500" />
        <path d="M5 6h8v9H5z" fill="#fff" stroke="#333" />
      </Icon>
      <Caret />
    </button>
    <button className="ml-6 flex items-center gap-1" aria-label="Display Settings">
      <Icon box="0 0 24 26" className="w-6">
        <path d="M1 1h22v19H1z" fill="#eef0f4" stroke="#333" strokeWidth="1.500" />
        <path d="M3 3h18v14H3z" fill="#94b4dd" stroke="#44649a" />
        <path d="M10 20h4v3l4 2H6l4-2z" fill="#ccc" stroke="#333" />
      </Icon>
      <Caret />
    </button>
    <button className="ml-3 flex items-center gap-1" aria-label="Grid and Snaps">
      <Icon box="0 0 24 26" className="w-6">
        <path d="M1 1h22v24H1z" fill="#fff" stroke="#333" strokeWidth="1.500" />
        <path d="M1 13h22v12H1z" fill="#a9afc0" opacity="0.6" />
        <path d="M4 1v24M8 1v24M12 1v24M16 1v24M20 1v24M1 5h22M1 9h22M1 13h22M1 17h22M1 21h22" stroke="#666" strokeWidth="0.800" />
      </Icon>
      <Caret />
    </button>
    <button className="ml-3 flex items-center gap-1" aria-label="Viewports">
      <Icon box="0 0 24 22" className="w-6">
        <path d="M1 1h22v20H1z" fill="#8db2e2" stroke="#2f4a78" strokeWidth="1.500" />
        <path d="M12 1v20M1 11h22" stroke="#2f4a78" strokeWidth="1.500" />
        <path d="M4 4h5v4H4zM15 4h5v4h-5zM4 14h5v4H4zM15 14h5v4h-5z" fill="none" stroke="#5f86bd" />
      </Icon>
      <Caret />
    </button>
  </div>
)

/* ---------- timeline ---------- */

const playback = [
  { name: "Go to start", d: "M0 0h3v22H0zM20 0v22L4 11z" },
  { name: "Step back", d: "M16 0v22L0 11zM17 5h3v11h-3z" },
  { name: "Play", d: "M0-1v24l20-12z" },
  { name: "Step forward", d: "M4 0v22l17-11zM0 5h3v11H0z" },
  { name: "Go to end", d: "M17 0h3v22h-3zM0 0v22l16-11z" },
]

const SketchFeature = () => (
  <Icon className="size-[26px]">
    <path d="M8 3h44M3 8v44M57 8v24M8 57h24M18 16h22M16 21v17M42 18q-2 22-24 24" fill="none" stroke="#777" strokeWidth="3" />
    <path d="M0 0h7v7H0zM53 0h7v7h-7zM0 54h7v7H0zM12 12h8v8h-8zM38 12h8v8h-8zM12 38h8v8h-8z" fill="#1a87d6" />
    <path d="m34 63 3-14 8 8z" fill="#555" />
    <path d="m37 49 14-14 9 7-15 15z" fill="#f4b23c" />
    <path d="m51 35 5-4q6 0 8 8l-4 3z" fill="#e03a3a" />
  </Icon>
)

const small = "size-[26px]"

const features = [
  { name: "Sketch1", icon: <SketchFeature /> },
  { name: "Extrude1", icon: <Icon className={small}><ExtrudeShape /></Icon> },
  {
    name: "Sphere1",
    icon: (
      <Icon className={small}>
        <circle cx="32" cy="32" r="31" fill="#86c9fb" stroke="#5ea9de" />
        <path d="M1 34q31 16 62 0a31 31 0 0 1-62 0z" fill="#67b0e7" />
      </Icon>
    ),
  },
  { name: "Plane1", icon: <Icon className={small}><ConstructShape /></Icon> },
  { name: "Sketch2", icon: <SketchFeature /> },
  { name: "Plane2", icon: <Icon className={small}><ConstructShape /></Icon> },
  { name: "Sketch3", icon: <SketchFeature /> },
  { name: "SplitBody1", icon: <Icon className={small}><SplitShape /></Icon> },
]

const Timeline = () => (
  <footer className="flex h-[81px] shrink-0 items-center rounded-bl-xl border-b-2 border-t-2 border-b-[#9c9c9c] border-t-[#c9c9c9] bg-[#f1f1f1] pl-[17px] pr-5">
    <div className="flex gap-[19px]">
      {playback.map((p) => (
        <button key={p.name} aria-label={p.name}>
          <Icon box="0 0 21 22" className="w-[21px]">
            <path d={p.d} fill="#4b4b4b" />
          </Icon>
        </button>
      ))}
    </div>
    <div className="relative ml-9 mt-3 w-[294px]">
      <div className="flex justify-between">
        {features.map((f) => (
          <button key={f.name} aria-label={f.name}>
            {f.icon}
          </button>
        ))}
      </div>
      <svg viewBox="0 0 294 17" className="block w-full" aria-hidden="true">
        <path d="M13 4v11h269V4M51 4v11M90 4v11M128 4v11M167 4v11M205 4v11M243 4v11" fill="none" stroke="#cbcbcb" strokeWidth="3" />
      </svg>
      <svg viewBox="0 0 20 52" className="absolute -right-4 -top-2.5 w-5" aria-label="Timeline marker">
        <path d="M0 0h20v8l-8 7v37H8V15L0 8z" fill="#606060" />
      </svg>
    </div>
    <button className="ml-auto" aria-label="Timeline settings">
      <Gear />
    </button>
  </footer>
)

export default function App() {
  return (
    <div className="flex h-screen flex-col overflow-hidden bg-[#1d4786] font-['Noto_Sans',sans-serif]">
      <SystemBar />
      <div className="flex min-h-0 flex-1 flex-col border-r-4 border-[#bdbdbd]">
        <div className="flex h-[35px] shrink-0 items-center border-b-2 border-[#a8a8a8] bg-linear-to-b from-[#e8e8e8] to-[#cfcfcf] pl-4">
          <div className="flex gap-4">
            {["Close", "Minimize", "Zoom window"].map((label) => (
              <button key={label} aria-label={label} className="size-6 rounded-full border border-[#b4b4b4] bg-[#d6d6d6]" />
            ))}
          </div>
          <h1 className="flex-1 pr-[120px] text-center font-[Inter,sans-serif] text-[20px] leading-6 text-[#3d3d3d]">
            Autodesk Fusion 360 (Education License)
          </h1>
        </div>
        <DocumentStrip />
        <Ribbon />
        <main className="relative min-h-0 flex-1 overflow-hidden bg-white">
          <Scene />
          <Browser />
          <div className="absolute bottom-2 left-[7px]">
            <PanelBar title="COMMENTS" open={false} />
          </div>
          <NavBar />
        </main>
        <Timeline />
      </div>
    </div>
  )
}
